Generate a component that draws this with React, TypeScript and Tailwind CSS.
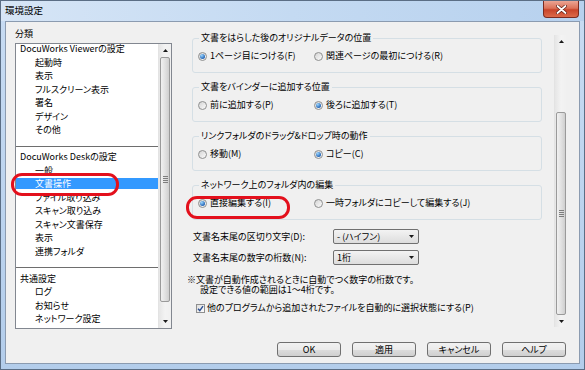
import clsx from 'clsx';

const F = "font-['Noto_Sans_CJK_JP','Noto_Sans_CJK_SC',sans-serif] [font-feature-settings:'palt']";

type Row = { t?: string; head?: boolean; sep?: boolean; sel?: boolean };

const rows: Row[] = [
    { t: 'DocuWorks Viewerの設定', head: true },
    { t: '起動時' },
    { t: '表示' },
    { t: 'フルスクリーン表示' },
    { t: '署名' },
    { t: 'デザイン' },
    { t: 'その他' },
    { sep: true },
    { t: 'DocuWorks Deskの設定', head: true },
    { t: '一般' },
    { t: '文書操作', sel: true },
    { t: 'ファイル取り込み' },
    { t: 'スキャン取り込み' },
    { t: 'スキャン文書保存' },
    { t: '表示' },
    { t: '連携フォルダ' },
    { sep: true },
    { t: '共通設定', head: true },
    { t: 'ログ' },
    { t: 'お知らせ' },
    { t: 'ネットワーク設定' },
    { t: 'ネットワーク一時フォルダ設定' },
];

function Arrow({ up }: { up?: boolean }) {
    return (
        <svg width="5" height="3" viewBox="0 0 5 3">
            <polygon points={up ? '2.5,0 5,3 0,3' : '0,0 5,0 2.5,3'} fill="#1a1a1a" />
        </svg>
    );
}

function ScrollBar({ gap, thumb }: { gap: number; thumb: number }) {
    return (
        <div className="flex h-full w-[13px] flex-col bg-gradient-to-r from-[#e6e6e6] via-[#f3f3f3] to-[#f0f0f0] border-l border-[#e3e3e3]">
            <div className="flex h-[13px] shrink-0 items-center justify-center">
                <Arrow up />
            </div>
            <div style={{ height: gap }} className="shrink-0" />
            <div
                style={{ height: thumb }}
                className="mx-[1px] flex shrink-0 flex-col items-center justify-center gap-[1px] rounded-[2px] border border-[#9a9a9a] bg-gradient-to-r from-[#f1f1f1] via-[#e2e2e2] to-[#cfcfcf]"
            >
                <span className="h-px w-[5px] bg-[#7d7d7d]" />
                <span className="h-px w-[5px] bg-[#7d7d7d]" />
                <span className="h-px w-[5px] bg-[#7d7d7d]" />
                <span className="h-px w-[5px] bg-[#7d7d7d]" />
            </div>
            <div className="flex-1" />
            <div className="flex h-[13px] shrink-0 items-center justify-center">
                <Arrow />
            </div>
        </div>
    );
}

function Radio({ checked, label, className }: { checked?: boolean; label: string; className?: string }) {
    return (
        <div className={clsx('flex h-[12px] items-center gap-[3px]', className)}>
            <span className="flex h-[9px] w-[9px] shrink-0 items-center justify-center rounded-full border border-[#8e8f8f] bg-gradient-to-br from-[#d4d4d4] to-[#fcfcfc]">
                {checked && (
                    <span className="h-[5px] w-[5px] rounded-full bg-[radial-gradient(circle_at_35%_30%,#9bd6ff,#1d5fb2_75%)]" />
                )}
            </span>
            <span className="whitespace-nowrap">{label}</span>
        </div>
    );
}

function Group({ title, a, b, pick }: { title: string; a: string; b: string; pick: number }) {
    return (
        <fieldset className="ml-[7px] w-[350px] rounded-[3px] border border-[#d5dfe5] pt-[6px] pb-[10px]">
            <legend className="ml-[6px] px-[2px] leading-[12px]">{title}</legend>
            <div className="flex pl-[5px]">
                <Radio checked={pick === 0} label={a} className="w-[116px]" />
                <Radio checked={pick === 1} label={b} />
            </div>
        </fieldset>
    );
}

function Select({ value }: { value: string }) {
    return (
        <div className="flex h-[15px] w-[86px] items-center justify-between rounded-[2px] border border-[#707070] bg-gradient-to-b from-[#f3f3f3] to-[#dddddd] pl-[3px] pr-[4px]">
            <span className="leading-[12px]">{value}</span>
            <Arrow />
        </div>
    );
}

function Button({ label }: { label: string }) {
    return (
        <div className="flex h-[15px] w-[64px] items-center justify-center rounded-[3px] border border-[#707070] bg-[linear-gradient(#f2f2f2_0%,#ebebeb_50%,#dddddd_50%,#cfcfcf_100%)] leading-[12px]">
            {label}
        </div>
    );
}

export default function App() {
    return (
        <div
            className={clsx(
                'relative flex h-[370px] w-[585px] flex-col overflow-hidden border border-[#5b6e85] bg-gradient-to-b from-[#c8dcf3] to-[#b3cdeb] text-[9px] text-black',
                F,
            )}
        >
            {/* title bar */}
            <div className="flex h-[20px] shrink-0 items-start justify-between bg-gradient-to-r from-[#d6e5f6] via-[#c4daf2] to-[#b7d1ee] pl-[4px] pr-[5px]">
                <span className="mt-[3px] text-[9.5px] leading-[13px]">環境設定</span>
                <div className="flex h-[17px] w-[36px] items-center justify-center rounded-b-[4px] border border-t-0 border-[#7a2b20] bg-[linear-gradient(#eba594_0%,#dc7259_45%,#c8442a_55%,#dc6a4a_100%)]">
                    <svg width="11" height="9" viewBox="0 0 11 9">
                        <path d="M1.5 1 L9.5 8 M9.5 1 L1.5 8" stroke="#5a1a10" strokeWidth="3.2" strokeLinecap="round" />
                        <path d="M1.5 1 L9.5 8 M9.5 1 L1.5 8" stroke="#ffffff" strokeWidth="1.8" strokeLinecap="round" />
                    </svg>
                </div>
            </div>

            {/* client area */}
            <div className="mx-[4px] mb-[5px] flex flex-1 flex-col border border-[#8b9bb0] bg-[#f0f0f0]">
                <div className="flex h-[307px] shrink-0">
                    {/* left: category list */}
                    <div className="flex flex-col pl-[9px] pt-[6px]">
                        <span className="leading-[12px]">分類</span>
                        <div className="mt-[3px] flex h-[286px] w-[157px] border border-[#828790] bg-white">
                            <div className="flex-1 overflow-hidden">
                                <div className="-mt-[2px]">
                                    {rows.map((r, i) =>
                                        r.sep ? (
                                            <div key={i} className="h-[13.5px] pt-[9px]">
                                                <div className="h-px bg-[#6e6e6e]" />
                                            </div>
                                        ) : r.sel ? (
                                            <div key={i} className="flex h-[13.5px] items-center">
                                                <div className="h-[11px] w-full bg-[#3399ff] pl-[19px] leading-[11px] text-white">
                                                    {r.t}
                                                </div>
                                            </div>
                                        ) : (
                                            <div
                                                key={i}
                                                className={clsx(
                                                    'h-[13.5px] whitespace-nowrap leading-[13.5px]',
                                                    r.head ? 'pl-[4px]' : 'pl-[19px]',
                                                )}
                                            >
                                                {r.t}
                                            </div>
                                        ),
                                    )}
                                </div>
                            </div>
                            <ScrollBar gap={0} thumb={245} />
                        </div>
                    </div>

                    {/* right: settings panel */}
                    <div className="ml-[13px] mt-[10px] flex h-[296px] w-[382px]">
                        <div className="flex w-[370px] flex-col overflow-hidden">
                            <Group
                                title="文書をはらした後のオリジナルデータの位置"
                                a="1ページ目につける(F)"
                                b="関連ページの最初につける(R)"
                                pick={0}
                            />
                            <div className="mt-[8px]">
                                <Group
                                    title="文書をバインダーに追加する位置"
                                    a="前に追加する(P)"
                                    b="後ろに追加する(T)"
                                    pick={1}
                                />
                            </div>
                            <div className="mt-[8px]">
                                <Group
                                    title="リンクフォルダのドラッグ&ドロップ時の動作"
                                    a="移動(M)"
                                    b="コピー(C)"
                                    pick={1}
                                />
                            </div>
                            <div className="mt-[8px]">
                                <Group
                                    title="ネットワーク上のフォルダ内の編集"
                                    a="直接編集する(I)"
                                    b="一時フォルダにコピーして編集する(J)"
                                    pick={0}
                                />
                            </div>

                            <div className="ml-[8px] mt-[9px] flex items-center">
                                <span className="w-[140px]">文書名末尾の区切り文字(D):</span>
                                <Select value="- (ハイフン)" />
                            </div>
                            <div className="ml-[8px] mt-[6px] flex items-center">
                                <span className="w-[140px]">文書名末尾の数字の桁数(N):</span>
                                <Select value="1桁" />
                            </div>

                            <div className="ml-[2px] mt-[10px] leading-[10px]">
                                <div>※文書が自動作成されるときに自動でつく数字の桁数です。</div>
                                <div className="pl-[13px]">設定できる値の範囲は1〜4桁です。</div>
                            </div>

                            <div className="ml-[11px] mt-[7px] flex h-[12px] items-center gap-[2px]">
                                <span className="flex h-[9px] w-[9px] items-center justify-center border border-[#8e8f8f] bg-gradient-to-br from-[#dedede] to-[#fcfcfc]">
                                    <svg width="7" height="7" viewBox="0 0 7 7">
                                        <path d="M1 3.8 L2.8 5.6 L6 1.2" stroke="#2c4f93" strokeWidth="1.4" fill="none" />
                                    </svg>
                                </span>
                                <span>他のプログラムから追加されたファイルを自動的に選択状態にする(P)</span>
                            </div>
                        </div>
                        <div className="mt-[3px] h-[292px]">
                            <ScrollBar gap={64} thumb={203} />
                        </div>
                    </div>
                </div>

                {/* buttons */}
                <div className="mt-[13px] flex justify-end gap-[11px] pr-[13px]">
                    <Button label="OK" />
                    <Button label="適用" />
                    <Button label="キャンセル" />
                    <Button label="ヘルプ" />
                </div>
            </div>

            {/* annotation marks */}
            <div className="absolute left-[10px] top-[172px] h-[23px] w-[108px] rounded-[11px] border-[3px] border-[#e3101c]" />
            <div className="absolute left-[185px] top-[195px] h-[23px] w-[104px] rounded-[11px] border-[3px] border-[#e3101c]" />
        </div>
    );
}
